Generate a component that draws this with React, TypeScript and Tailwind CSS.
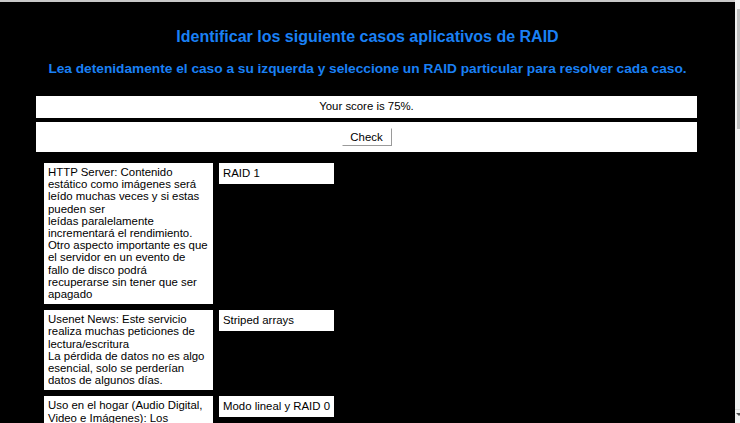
const cases = [
  {
    lines: [
      'HTTP Server: Contenido estático como imágenes será leído muchas veces y si estas pueden ser',
      'leídas paralelamente incrementará el rendimiento. Otro aspecto importante es que el servidor en un evento de fallo de disco podrá recuperarse sin tener que ser apagado',
    ],
    answer: 'RAID 1',
  },
  {
    lines: [
      'Usenet News: Este servicio realiza muchas peticiones de lectura/escritura',
      'La pérdida de datos no es algo esencial, solo se perderían datos de algunos días.',
    ],
    answer: 'Striped arrays',
  },
  {
    lines: [
      'Uso en el hogar (Audio Digital, Video e Imágenes): Los archivos son grandes y se necesita mucho espacio de almacenamiento a bajo costo.',
    ],
    answer: 'Modo lineal y RAID 0',
  },
];

function CaseRow({ lines, answer }: { lines: string[]; answer: string }) {
  return (
    <div className="flex items-start gap-[6px]">
      <div className="w-[169px] bg-white pl-[4px] pr-[5px] pt-[3px] pb-[4px] text-[11.4px] leading-[12.2px] text-black">
        {lines.map((line, i) => (
          <span key={i}>
            {i > 0 && <br />}
            {line}
          </span>
        ))}
      </div>
      <div className="w-[115px] whitespace-nowrap bg-white px-[4px] pt-[4px] pb-[5px] text-[11.4px] leading-[12px] text-black">
        {answer}
      </div>
    </div>
  );
}

export default function App() {
  return (
    <div className="flex h-[423px] w-[740px] overflow-hidden font-['Liberation_Sans',Arial,sans-serif]">
      <div className="flex-1 overflow-hidden border-t-2 border-[#c9c9c9] bg-black">
        <h1 className="mt-[25px] text-center text-[16px] leading-[20px] font-bold text-[#1a80f5]">
          Identificar los siguiente casos aplicativos de RAID
        </h1>
        <h2 className="mt-[14px] text-center text-[13.7px] leading-[16px] font-bold text-[#1a80f5]">
          Lea detenidamente el caso a su izquerda y seleccione un RAID particular para resolver cada caso.
        </h2>

        <div className="ml-[36px] mt-[19px] w-[661px]">
          <div className="flex h-[22px] items-center justify-center bg-white text-[11.4px] text-black">
            Your score is 75%.
          </div>
          <div className="mt-[4px] flex h-[30px] items-center justify-center bg-white">
            <button
              type="button"
              className="h-[18px] w-[50px] border border-t-white border-l-white border-r-[#9a9a9a] border-b-[#9a9a9a] bg-white text-[11.4px] leading-[14px] text-black"
            >
              Check
            </button>
          </div>

          <div className="mt-[11px] ml-[8px] flex flex-col gap-[6px]">
            {cases.map((c) => (
              <CaseRow key={c.answer} lines={c.lines} answer={c.answer} />
            ))}
          </div>
        </div>
      </div>

      {/* scrollbar edge */}
      <div className="flex w-[5px] flex-col bg-[#f0f0f0]">
        <div className="h-[9px]" />
        <div className="ml-[2px] h-[120px] bg-[#c2c2c2]" />
        <div className="flex-1" />
        <div className="h-px bg-[#dcdcdc]" />
        <div className="flex h-[13px] items-start pt-[3px] pl-[1px]">
          <div className="h-0 w-0 border-x-[3px] border-t-[3px] border-x-transparent border-t-[#505050]" />
        </div>
      </div>
    </div>
  );
}
